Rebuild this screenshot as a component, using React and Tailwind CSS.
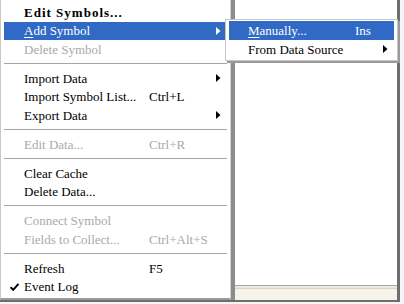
const font = { fontFamily: '"Liberation Serif", "Times New Roman", serif' };

function Arrow({ white }) {
  return (
    <svg width="5" height="8" viewBox="0 0 5 8" className="block">
      <path d="M0 0 L4.5 4 L0 8 Z" fill={white ? "#ffffff" : "#000000"} />
    </svg>
  );
}

function Check() {
  return (
    <svg width="9" height="8" viewBox="0 0 9 8" className="block">
      <path d="M0.5 4.2 L3.2 6.8 L8.5 0.8" stroke="#000" strokeWidth="2" fill="none" />
    </svg>
  );
}

function Row({ label, shortcut, arrow, disabled, active, bold, check, ul }) {
  const color = active ? "text-white" : disabled ? "text-[#a9a9a9]" : "text-black";
  return (
    <div className={`flex h-[18.5px] items-center ${active ? "bg-[#316ac5]" : ""} ${color}`}>
      <div className="flex w-[20px] items-center justify-center pl-[1px]">{check && <Check />}</div>
      <div className={`w-[125px] whitespace-nowrap ${bold ? "font-bold tracking-[1px]" : ""}`}>
        {ul ? (
          <>
            <span className="underline underline-offset-2">{label[0]}</span>
            {label.slice(1)}
          </>
        ) : (
          label
        )}
      </div>
      <div className="flex-1 whitespace-nowrap">{shortcut}</div>
      <div className="flex w-[11px] items-center">{arrow && <Arrow white={active} />}</div>
    </div>
  );
}

function Sep() {
  return (
    <div className="flex h-[10.5px] items-center">
      <div className="h-[2px] w-full border-t border-[#a6a6a6] border-b border-b-white" />
    </div>
  );
}

export default function App() {
  return (
    <div className="h-[304px] w-[404px] overflow-hidden bg-[#f4f4f4] text-[13px]" style={font}>
      <div className="relative flex h-[302px] w-[400px] border-r-[3px] border-b-[2px] border-[#6e6e6e] bg-white">
        <div className="h-full w-[231px] border-l border-[#c8c8c8] border-r border-r-[#d4d4d4] border-b-2 border-b-[#9a9a9a] bg-white pl-[3px] pr-[3px] pt-[3px]">
          <Row label="Edit Symbols..." bold />
          <Row label="Add Symbol" active arrow ul />
          <Row label="Delete Symbol" disabled />
          <Sep />
          <Row label="Import Data" arrow />
          <Row label="Import Symbol List..." shortcut="Ctrl+L" />
          <Row label="Export Data" arrow />
          <Sep />
          <Row label="Edit Data..." shortcut="Ctrl+R" disabled />
          <Sep />
          <Row label="Clear Cache" />
          <Row label="Delete Data..." />
          <Sep />
          <Row label="Connect Symbol" disabled />
          <Row label="Fields to Collect..." shortcut="Ctrl+Alt+S" disabled />
          <Sep />
          <Row label="Refresh" shortcut="F5" />
          <Row label="Event Log" check />
        </div>
        <div className="flex h-full flex-1 flex-col border-l-4 border-[#8c8c8c]">
          <div className="flex-1 bg-white" />
          <div className="h-[15px] border-t border-[#a9a9a9] bg-[#f6f4e8]">
            <div className="h-[3px] border-b border-[#d9d5c0] bg-[#ebe9dd]" />
          </div>
        </div>

        <div className="absolute left-[225px] top-[19px] w-[173px] border border-[#c6c6c6] bg-white px-[3px] py-[1px] shadow-[2px_2px_0_#9a9a9a]">
          <div className="flex h-[19px] items-center bg-[#316ac5] text-white">
            <div className="w-[19px]" />
            <div className="w-[107px] whitespace-nowrap">
              <span className="underline underline-offset-2">M</span>anually...
            </div>
            <div className="flex-1">Ins</div>
          </div>
          <div className="flex h-[18.5px] items-center text-black">
            <div className="w-[19px]" />
            <div className="flex-1 whitespace-nowrap">From Data Source</div>
            <div className="flex w-[11px] items-center">
              <Arrow />
            </div>
          </div>
        </div>
      </div>
    </div>
  );
}
